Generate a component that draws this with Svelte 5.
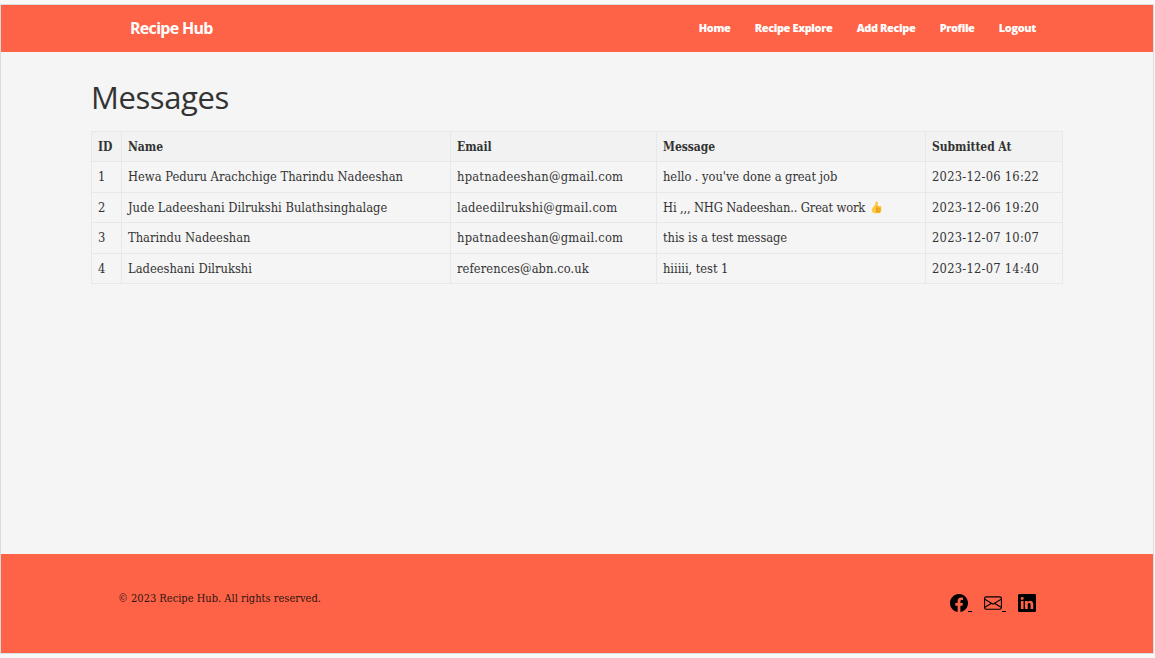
<script>
  const links = ['Home', 'Recipe Explore', 'Add Recipe', 'Profile', 'Logout'];
  const columns = ['ID', 'Name', 'Email', 'Message', 'Submitted At'];
  const messages = [
    { id: 1, name: 'Hewa Peduru Arachchige Tharindu Nadeeshan', email: 'hpatnadeeshan@gmail.com', text: "hello . you've done a great job", at: '2023-12-06 16:22' },
    { id: 2, name: 'Jude Ladeeshani Dilrukshi Bulathsinghalage', email: 'ladeedilrukshi@gmail.com', text: 'Hi ,,, NHG Nadeeshan.. Great work', thumb: true, at: '2023-12-06 19:20' },
    { id: 3, name: 'Tharindu Nadeeshan', email: 'hpatnadeeshan@gmail.com', text: 'this is a test message', at: '2023-12-07 10:07' },
    { id: 4, name: 'Ladeeshani Dilrukshi', email: 'references@abn.co.uk', text: 'hiiiii, test 1', at: '2023-12-07 14:40' }
  ];
</script>

<div class="page">
  <header>
    <span class="brand">Recipe Hub</span>
    <nav>
      {#each links as link}<a href="#top">{link}</a>{/each}
    </nav>
  </header>
  <main>
    <h1>Messages</h1>
    <table>
      <colgroup><col class="c1" /><col class="c2" /><col class="c3" /><col class="c4" /><col class="c5" /></colgroup>
      <thead>
        <tr>{#each columns as c}<th>{c}</th>{/each}</tr>
      </thead>
      <tbody>
        {#each messages as m}
          <tr>
            <td>{m.id}</td>
            <td class="name">{m.name}</td>
            <td class="email">{m.email}</td>
            <td class="text" class:emoji={m.thumb}>{m.text}{#if m.thumb}<svg class="thumb" viewBox="0 0 11 13" aria-hidden="true"><path fill="#ffc83d" d="M4.600 1.200C4.800.2 6.800.3 6.900 1.800L6.700 5h2.100c1 0 1.500.6 1.400 1.300.3.500.3 1 .1 1.500.2.500.1 1-.2 1.400.100.500 0 1-.3 1.300 0 1.200-.6 1.800-1.700 1.800H4.500C2.200 12.300.800 11 .800 9c0-1.800.8-2.600 1.900-3.500C3.900 4.500 4.400 2.800 4.600 1.200z"/><path fill="none" stroke="#e2900c" stroke-width=".9" d="M6.700 5C5.900 5.400 5.500 6 5.700 6.800V11.400M6 7.200h3.700M6 9h3.700M6 10.700h3.300"/></svg>{/if}</td>
            <td class="date">{m.at}</td>
          </tr>
        {/each}
      </tbody>
    </table>
  </main>
  <footer>
    <p>© 2023 Recipe Hub. All rights reserved.</p>
    <div class="social">
      <a href="#facebook" aria-label="Facebook"><svg viewBox="0 0 16 16"><path d="M16 8.049c0-4.446-3.582-8.050-8-8.050C3.580 0-.002 3.603-.002 8.050c0 4.017 2.926 7.347 6.750 7.951v-5.625h-2.030V8.050H6.750V6.275c0-2.017 1.195-3.131 3.022-3.131.876 0 1.791.157 1.791.157v1.980h-1.009c-.993 0-1.303.621-1.303 1.258v1.510h2.218l-.354 2.326H9.250V16c3.824-.604 6.750-3.934 6.750-7.951z"/></svg><i></i></a>
      <a href="#mail" aria-label="Email"><svg viewBox="0 0 16 16"><path d="M0 4a2 2 0 0 1 2-2h12a2 2 0 0 1 2 2v8a2 2 0 0 1-2 2H2a2 2 0 0 1-2-2V4Zm2-1a1 1 0 0 0-1 1v.217l7 4.200 7-4.200V4a1 1 0 0 0-1-1H2Zm13 2.383-4.708 2.825L15 11.105V5.383Zm-.034 6.876-5.640-3.471L8 9.583l-1.326-.795-5.640 3.470A1 1 0 0 0 2 13h12a1 1 0 0 0 .966-.741ZM1 11.105l4.708-2.897L1 5.383v5.722Z"/></svg><i></i></a>
      <a href="#linkedin" aria-label="LinkedIn"><svg viewBox="0 0 16 16"><path d="M0 1.146C0 .513.526 0 1.175 0h13.650C15.474 0 16 .513 16 1.146v13.708c0 .633-.526 1.146-1.175 1.146H1.175C.526 16 0 15.487 0 14.854V1.146zm4.943 12.248V6.169H2.542v7.225h2.401zm-1.200-8.212c.837 0 1.358-.554 1.358-1.248-.015-.709-.520-1.248-1.342-1.248-.822 0-1.359.540-1.359 1.248 0 .694.521 1.248 1.327 1.248h.016zm4.908 8.212V9.359c0-.216.016-.432.080-.586.173-.431.568-.878 1.232-.878.869 0 1.216.662 1.216 1.634v3.865h2.401V9.250c0-2.220-1.184-3.252-2.764-3.252-1.274 0-1.845.700-2.165 1.193v.025h-.016a5.540 5.540 0 0 1 .016-.025V6.169h-2.400c.030.678 0 7.225 0 7.225h2.400z"/></svg></a>
    </div>
  </footer>
</div>

<style>
  :global(body) { margin: 0; background: #f9f9f9; }
  :global(#app) { display: flow-root; height: 658px; }
  .page {
    box-sizing: border-box; width: 1154px; height: 650px; margin-top: 4px;
    display: flex; flex-direction: column;
    border: 1px solid #dcdcdc; background: #f5f5f5; color: #333;
    font-family: "DejaVu Serif Condensed", "DejaVu Serif", serif; font-stretch: condensed; font-size: 12.8px;
  }
  header {
    height: 47px; box-sizing: border-box; padding: 0 117px 2px 129px; flex: none;
    display: flex; align-items: center; justify-content: space-between;
    background: #ff6347; color: #fff;
    font-family: "Open Sans", sans-serif; font-stretch: normal; font-weight: 700;
  }
  .brand { font-size: 16px; letter-spacing: -.7px; }
  nav { display: flex; gap: 24.3px; font-size: 11px; font-weight: 800; letter-spacing: -.39px; }
  a { color: inherit; text-decoration: none; }
  main { flex: 1; padding: 0 90px; }
  h1 {
    margin: 21px 0 10px; height: 48px;
    font: 400 31px/48px "Open Sans", sans-serif; letter-spacing: -.4px;
  }
  table {
    table-layout: fixed; width: 972px; border-spacing: 0;
    border: solid #e8e8e8; border-width: 1px 0 0 1px;
  }
  .c1 { width: 30px; } .c2 { width: 329px; } .c3 { width: 206px; } .c4 { width: 269px; } .c5 { width: 137px; }
  th, td {
    box-sizing: border-box; height: 30px; padding: 0 0 0 6px; text-align: left;
    white-space: nowrap; border: solid #e8e8e8; border-width: 0 1px 1px 0; line-height: 20px;
  }
  tbody tr:nth-child(odd) td { height: 31px; }
  th { background: #f2f2f2; font-weight: 700; font-size: 12px; letter-spacing: -.05px; }
  .email { letter-spacing: .22px; }
  tr:last-child .email { letter-spacing: .08px; }
  .text { letter-spacing: -.05px; }
  .emoji { letter-spacing: -.16px; }
  .date { letter-spacing: .25px; }
  .thumb { width: 11px; height: 13px; margin-left: 6px; vertical-align: -2px; }
  footer {
    height: 99px; box-sizing: border-box; padding: 0 117px; flex: none;
    display: flex; justify-content: space-between; background: #ff6347; color: #2b1411;
  }
  footer p { margin: 35px 0 0; font-size: 11px; line-height: 20px; }
  .social { display: flex; gap: 12px; margin-top: 40px; color: #000; height: 18px; }
  .social a { display: flex; align-items: flex-end; }
  .social svg { width: 18px; height: 18px; fill: currentColor; }
  .social i { width: 4px; height: 1.5px; background: #000; }
</style>
